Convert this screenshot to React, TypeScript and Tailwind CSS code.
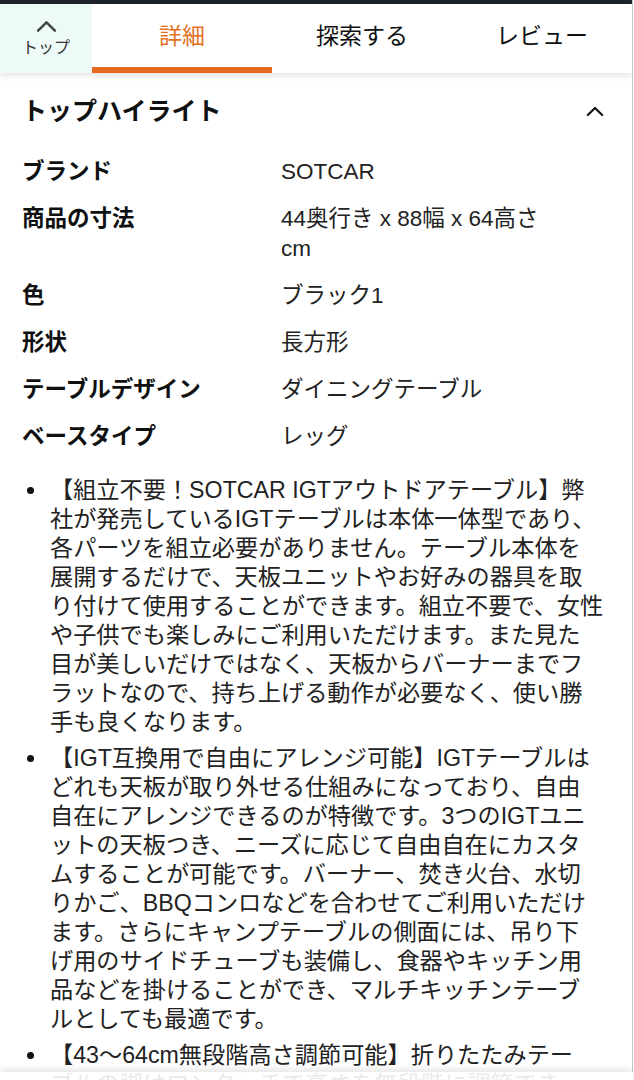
import React from 'react';

const specs = [
  { label: 'ブランド', value: ['SOTCAR'] },
  { label: '商品の寸法', value: ['44奥行き x 88幅 x 64高さ', 'cm'] },
  { label: '色', value: ['ブラック1'] },
  { label: '形状', value: ['長方形'] },
  { label: 'テーブルデザイン', value: ['ダイニングテーブル'] },
  { label: 'ベースタイプ', value: ['レッグ'] },
];

const bullets = [
  [
    '【組立不要！SOTCAR IGTアウトドアテーブル】弊',
    '社が発売しているIGTテーブルは本体一体型であり、',
    '各パーツを組立必要がありません。テーブル本体を',
    '展開するだけで、天板ユニットやお好みの器具を取',
    'り付けて使用することができます。組立不要で、女性',
    'や子供でも楽しみにご利用いただけます。また見た',
    '目が美しいだけではなく、天板からバーナーまでフ',
    'ラットなので、持ち上げる動作が必要なく、使い勝',
    '手も良くなります。',
  ],
  [
    '【IGT互換用で自由にアレンジ可能】IGTテーブルは',
    'どれも天板が取り外せる仕組みになっており、自由',
    '自在にアレンジできるのが特徴です。3つのIGTユニ',
    'ットの天板つき、ニーズに応じて自由自在にカスタ',
    'ムすることが可能です。バーナー、焚き火台、水切',
    'りかご、BBQコンロなどを合わせてご利用いただけ',
    'ます。さらにキャンプテーブルの側面には、吊り下',
    'げ用のサイドチューブも装備し、食器やキッチン用',
    '品などを掛けることができ、マルチキッチンテーブ',
    'ルとしても最適です。',
  ],
  [
    '【43〜64cm無段階高さ調節可能】折りたたみテー',
    'ブルの脚はワンタッチで高さを無段階に調節でき、',
  ],
];

const Chevron = ({ className }: { className?: string }) => (
  <svg viewBox="0 0 20 12" className={className} fill="none" stroke="currentColor" strokeWidth="2.4" strokeLinecap="round" strokeLinejoin="round">
    <path d="M2 10 L10 2 L18 10" />
  </svg>
);

export default function App() {
  return (
    <div className="min-h-screen bg-white text-[#0f1111] font-['Liberation_Sans','Noto_Sans_CJK_JP',sans-serif]">
      <div className="w-[633px] min-h-screen border-r border-[#c8c8c8] overflow-hidden">
        {/* top strip */}
        <div className="h-[4px] bg-[#1f242b]" />

        {/* tab bar */}
        <div className="relative z-10 flex h-[69px] bg-white shadow-[0_3px_6px_rgba(0,0,0,0.10)]">
          <div className="w-[92px] bg-[#eefaf8] flex flex-col items-center pt-[16px]">
            <Chevron className="w-[21px] h-[13px] text-[#444]" />
            <span className="text-[16px] leading-[20px] text-[#333] mt-[5px]">トップ</span>
          </div>
          <div className="w-[180px] flex flex-col">
            <div className="flex-1 flex items-center justify-center text-[23px] text-[#e3701f] pt-[2px]">詳細</div>
            <div className="h-[6px] bg-[#e4691f]" />
          </div>
          <div className="w-[180px] flex items-center justify-center text-[23px] pb-[4px]">探索する</div>
          <div className="w-[180px] flex items-center justify-center text-[23px] pb-[4px]">レビュー</div>
        </div>

        <div className="px-[22px]">
          {/* heading */}
          <div className="flex items-center justify-between pt-[23px] leading-[30px]">
            <h2 className="text-[25px] font-bold">トップハイライト</h2>
            <Chevron className="w-[18px] h-[11px] mr-[6px]" />
          </div>

          {/* spec table */}
          <div className="mt-[23px]">
            {specs.map((s) => (
              <div key={s.label} className="grid grid-cols-[259px_1fr] pt-[8px] pb-[9px] leading-[30px] text-[22.5px]">
                <div className="font-bold">{s.label}</div>
                <div className="text-[#222]">
                  {s.value.map((v) => (
                    <span key={v} className="block whitespace-nowrap">{v}</span>
                  ))}
                </div>
              </div>
            ))}
          </div>

          {/* bullets */}
          <ul className="mt-[15px] flex flex-col gap-[7px]">
            {bullets.map((lines, i) => (
              <li key={i} className="grid grid-cols-[28px_1fr] text-[23.2px] leading-[29px] text-[#222]">
                <div className="pt-[11px]">
                  <div className="ml-[5px] w-[7px] h-[7px] rounded-full bg-[#111]" />
                </div>
                <div>
                  {lines.map((l) => (
                    <span key={l} className="block whitespace-nowrap">{l}</span>
                  ))}
                </div>
              </li>
            ))}
          </ul>
        </div>
      </div>

      {/* bottom overlay */}
      <div className="fixed bottom-0 left-0 w-[633px] h-[8px] bg-white/90 shadow-[0_-3px_6px_rgba(0,0,0,0.10)]" />
    </div>
  );
}
